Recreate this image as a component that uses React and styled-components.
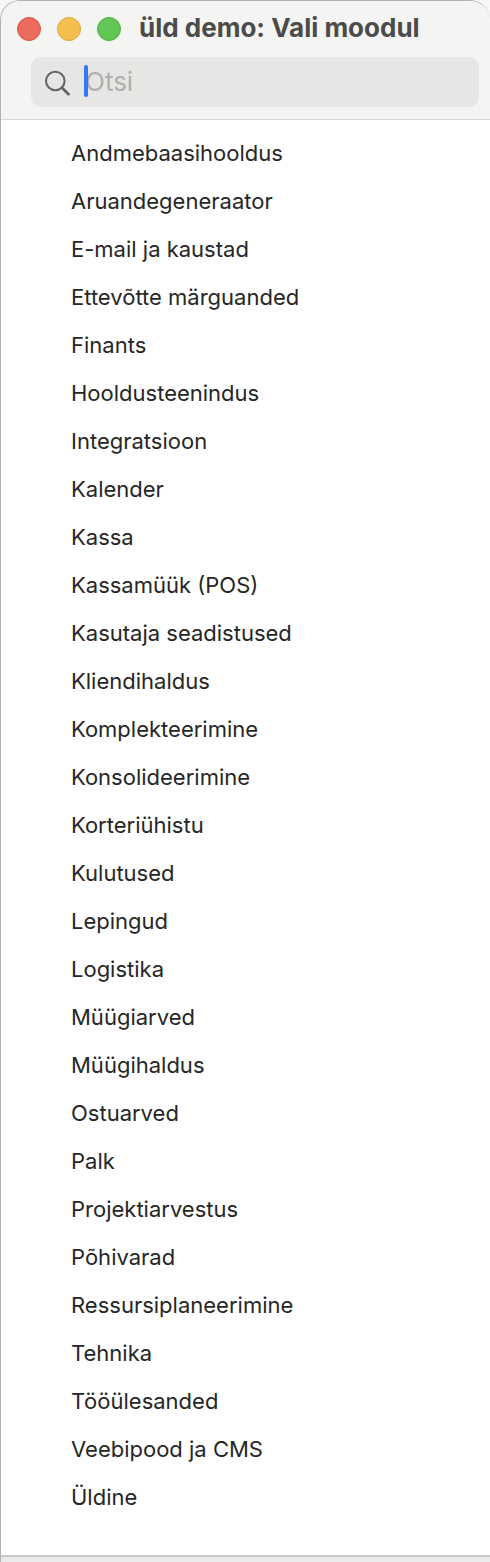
import React from "react";
import styled, { createGlobalStyle } from "styled-components";

const GlobalStyle = createGlobalStyle`
  *, *::before, *::after {
    box-sizing: border-box;
  }
  body {
    margin: 0;
    background: #f8f8f8;
    font-family: Inter, "Liberation Sans", sans-serif;
  }
`;

const Window = styled.div`
  display: flex;
  flex-direction: column;
  min-height: 100vh;
  overflow: hidden;
  background: #ffffff;
  border: 1px solid #b2b2b2;
  border-right: 0;
  border-bottom: 0;
  border-radius: 20px 20px 0 0;
`;

const Header = styled.header`
  display: flex;
  flex-direction: column;
  padding: 0 11px 12px 16px;
  background: #f4f4f2;
  border-bottom: 1px solid #d6d6d6;
`;

const TitleBar = styled.div`
  display: flex;
  align-items: center;
  height: 56px;
`;

const WindowButtons = styled.div`
  display: flex;
  gap: 16px;
  margin-right: 18px;
`;

const WindowButton = styled.button`
  width: 24px;
  height: 24px;
  padding: 0;
  border: 1px solid ${(p) => p.$edge};
  border-radius: 50%;
  background: ${(p) => p.$fill};
`;

const Title = styled.h1`
  margin: 0;
  padding-bottom: 2px;
  font-size: 26px;
  line-height: 32px;
  font-weight: 700;
  color: #4b4b4a;
  white-space: nowrap;
`;

const SearchField = styled.label`
  display: flex;
  align-items: center;
  height: 50px;
  margin-left: 14px;
  padding-left: 13px;
  border-radius: 10px;
  background: #e6e6e5;
`;

const SearchIcon = styled.svg`
  flex: none;
  width: 27px;
  height: 28px;
  margin-right: 14px;
`;

const Entry = styled.div`
  position: relative;
  flex: 1;
  min-width: 0;
`;

const SearchInput = styled.input`
  display: block;
  width: 100%;
  height: 50px;
  padding: 0 0 2px;
  border: 0;
  outline: 0;
  background: transparent;
  font-family: inherit;
  font-size: 26px;
  color: #262626;
  &::placeholder {
    color: #b0b0af;
    opacity: 1;
  }
`;

const Caret = styled.span`
  position: absolute;
  top: 8px;
  left: -1px;
  width: 4px;
  height: 32px;
  border-radius: 2px;
  background: #3478f6;
`;

const ModuleList = styled.ul`
  flex: 1;
  margin: 0;
  padding: 9px 0 33px;
  list-style: none;
`;

const ModuleItem = styled.li`
  display: flex;
`;

const ModuleButton = styled.button`
  width: 100%;
  height: 48px;
  padding: 0 16px 0 70px;
  border: 0;
  background: transparent;
  font-family: inherit;
  font-size: 22px;
  line-height: 28px;
  text-align: left;
  color: #262626;
`;

const Footer = styled.footer`
  height: 7px;
  background: #ebebeb;
  border-top: 2px solid #c8c8c8;
`;

const windowButtons = [
  { label: "Sulge", fill: "#ed6a5e", edge: "#d5584e" },
  { label: "Minimeeri", fill: "#f5bf4f", edge: "#dba33b" },
  { label: "Suurenda", fill: "#62c655", edge: "#4fad41" },
];

const modules = [
  "Andmebaasihooldus",
  "Aruandegeneraator",
  "E-mail ja kaustad",
  "Ettevõtte märguanded",
  "Finants",
  "Hooldusteenindus",
  "Integratsioon",
  "Kalender",
  "Kassa",
  "Kassamüük (POS)",
  "Kasutaja seadistused",
  "Kliendihaldus",
  "Komplekteerimine",
  "Konsolideerimine",
  "Korteriühistu",
  "Kulutused",
  "Lepingud",
  "Logistika",
  "Müügiarved",
  "Müügihaldus",
  "Ostuarved",
  "Palk",
  "Projektiarvestus",
  "Põhivarad",
  "Ressursiplaneerimine",
  "Tehnika",
  "Tööülesanded",
  "Veebipood ja CMS",
  "Üldine",
];

export default function App() {
  return (
    <>
      <GlobalStyle />
      <Window>
        <Header>
          <TitleBar>
            <WindowButtons>
              {windowButtons.map((b) => (
                <WindowButton
                  key={b.label}
                  type="button"
                  aria-label={b.label}
                  $fill={b.fill}
                  $edge={b.edge}
                />
              ))}
            </WindowButtons>
            <Title>üld demo: Vali moodul</Title>
          </TitleBar>
          <SearchField>
            <SearchIcon viewBox="0 0 27 28" fill="none" stroke="#666665" aria-hidden="true">
              <circle cx="11.3" cy="13" r="9.3" strokeWidth="2.1" />
              <path d="M18 19.8 L24.5 26.3" strokeWidth="2.8" strokeLinecap="round" />
            </SearchIcon>
            <Entry>
              <SearchInput type="text" placeholder="Otsi" aria-label="Otsi" />
              <Caret aria-hidden="true" />
            </Entry>
          </SearchField>
        </Header>
        <ModuleList>
          {modules.map((name) => (
            <ModuleItem key={name}>
              <ModuleButton type="button">{name}</ModuleButton>
            </ModuleItem>
          ))}
        </ModuleList>
        <Footer />
      </Window>
    </>
  );
}
